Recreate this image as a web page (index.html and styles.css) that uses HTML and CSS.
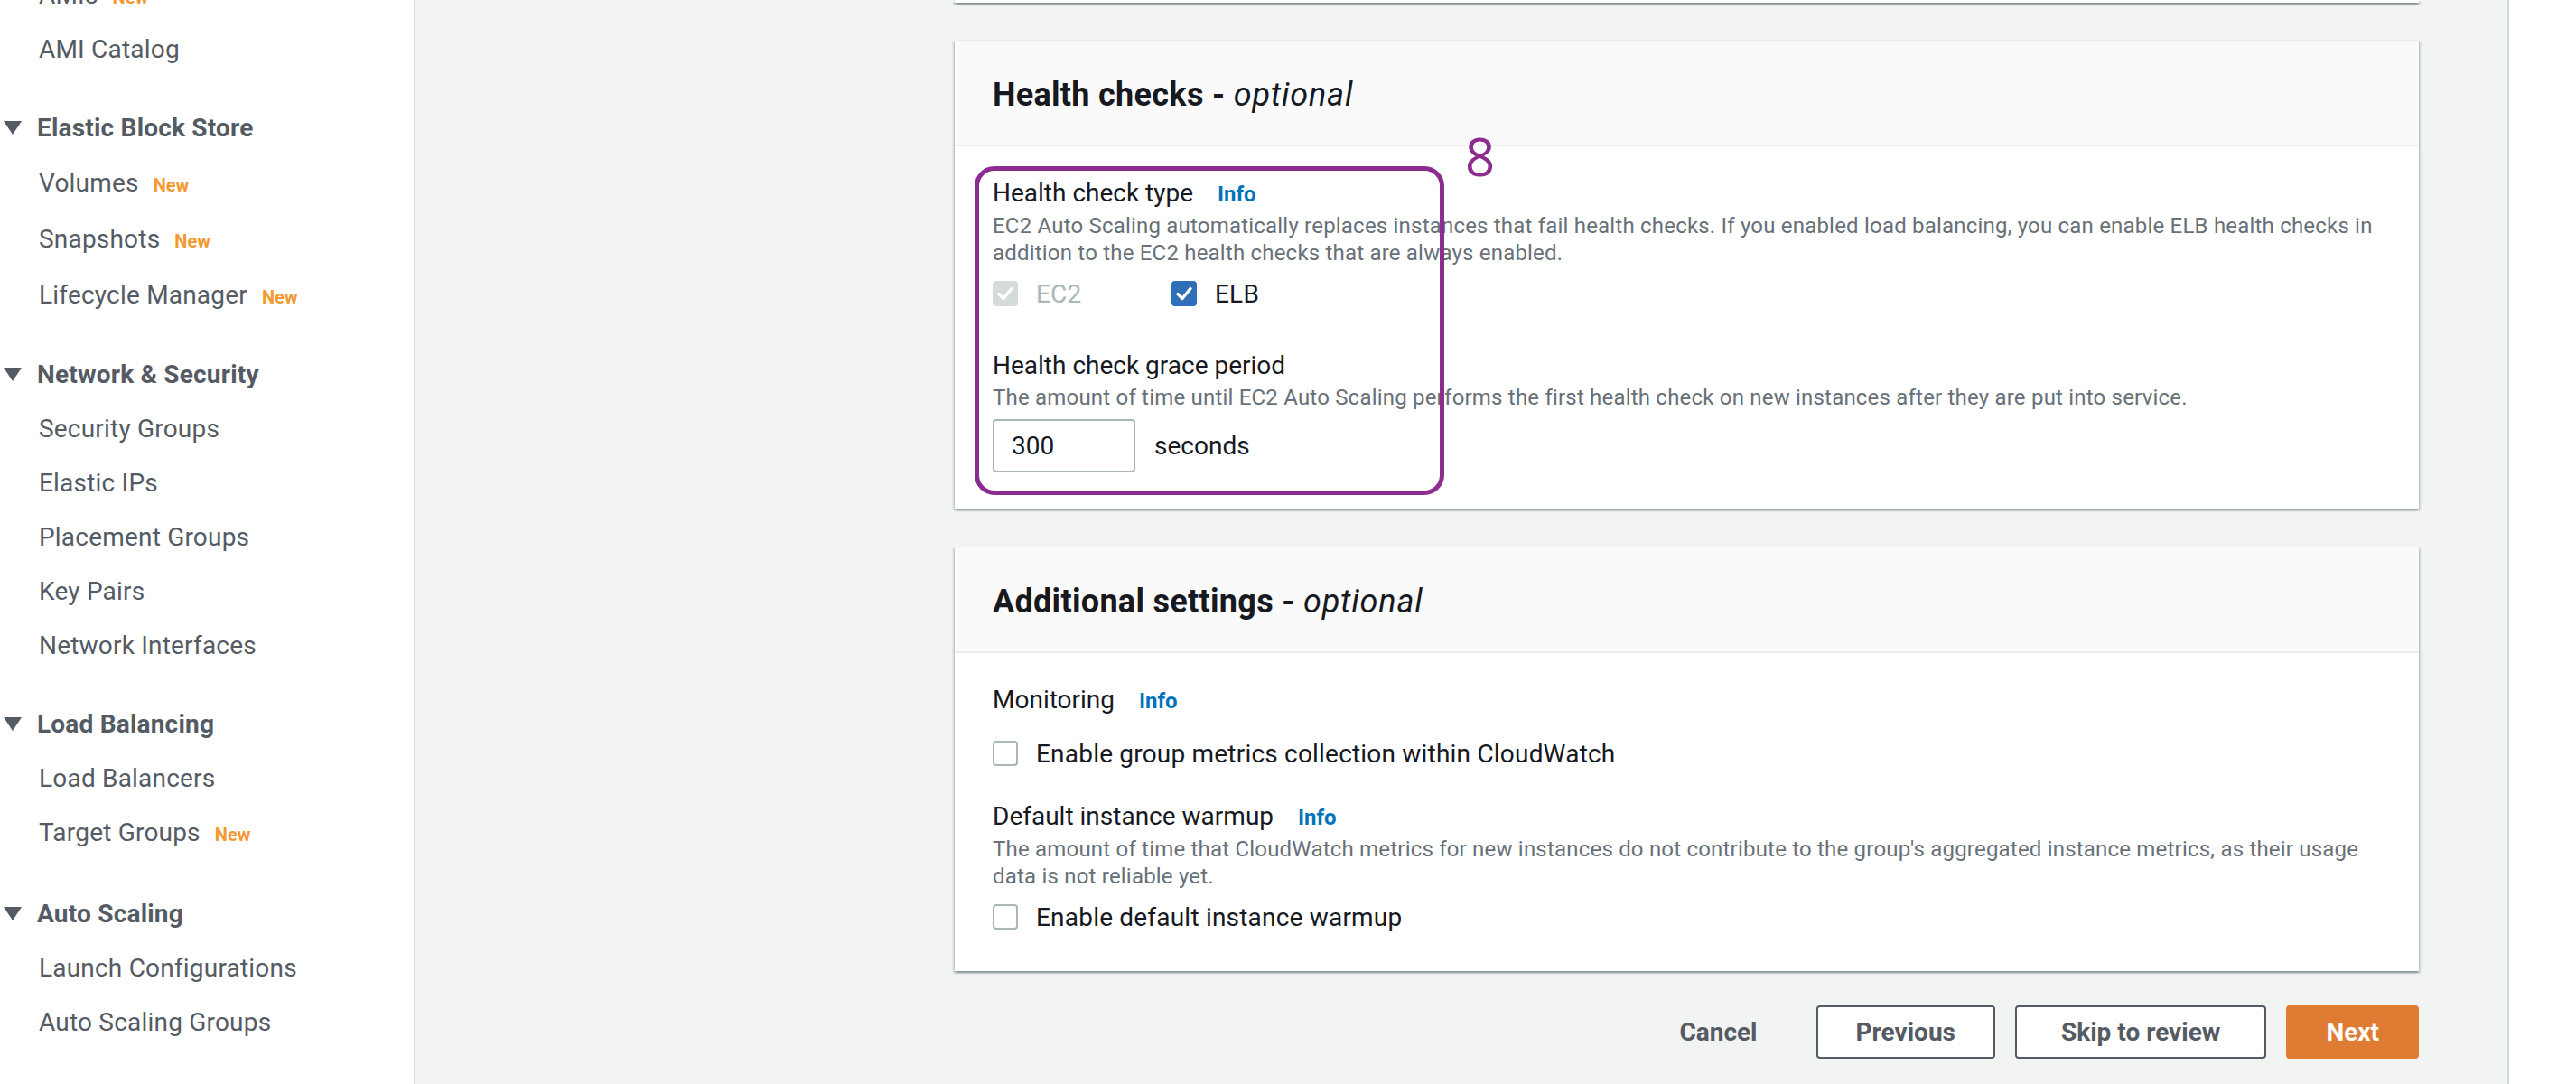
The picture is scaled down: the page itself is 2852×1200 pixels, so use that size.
FILE: index.html
```html
<!DOCTYPE html>
<html lang="en">
<head>
<meta charset="utf-8">
<title>Create Auto Scaling group - Health checks</title>
<link rel="stylesheet" href="styles.css">
</head>
<body>
<div class="app">
  <nav class="sidebar">
    <ul class="nav">
      <li class="nav-section">
        <div class="nav-header"><span class="caret"></span>Images</div>
        <ul class="nav-items">
          <li class="nav-item">AMIs<span class="badge-new">New</span></li>
          <li class="nav-item">AMI Catalog</li>
        </ul>
      </li>
      <li class="nav-section">
        <div class="nav-header"><span class="caret"></span>Elastic Block Store</div>
        <ul class="nav-items">
          <li class="nav-item nav-item-tall">Volumes<span class="badge-new">New</span></li>
          <li class="nav-item nav-item-tall">Snapshots<span class="badge-new">New</span></li>
          <li class="nav-item nav-item-tall">Lifecycle Manager<span class="badge-new">New</span></li>
        </ul>
      </li>
      <li class="nav-section">
        <div class="nav-header"><span class="caret"></span>Network &amp; Security</div>
        <ul class="nav-items">
          <li class="nav-item">Security Groups</li>
          <li class="nav-item">Elastic IPs</li>
          <li class="nav-item">Placement Groups</li>
          <li class="nav-item">Key Pairs</li>
          <li class="nav-item">Network Interfaces</li>
        </ul>
      </li>
      <li class="nav-section">
        <div class="nav-header"><span class="caret"></span>Load Balancing</div>
        <ul class="nav-items">
          <li class="nav-item">Load Balancers</li>
          <li class="nav-item">Target Groups<span class="badge-new">New</span></li>
        </ul>
      </li>
      <li class="nav-section nav-section-last">
        <div class="nav-header"><span class="caret"></span>Auto Scaling</div>
        <ul class="nav-items">
          <li class="nav-item">Launch Configurations</li>
          <li class="nav-item">Auto Scaling Groups</li>
        </ul>
      </li>
    </ul>
  </nav>

  <main class="main">
    <div class="wizard">
      <div class="card card-stub"></div>

      <section class="card card-health">
        <header class="card-header">
          <h2 class="card-title">Health checks - <i>optional</i></h2>
        </header>
        <div class="card-body">
          <div class="field-label">Health check type <a class="info">Info</a></div>
          <p class="field-desc">EC2 Auto Scaling automatically replaces instances that fail health checks. If you enabled load balancing, you can enable ELB health checks in addition to the EC2 health checks that are always enabled.</p>
          <div class="check-row check-row-tight">
            <label class="check check-wide check-disabled">
              <span class="box box-disabled">
                <svg viewBox="0 0 28 28" width="28" height="28"><polyline points="7,14.5 12,19.5 21,8.5" fill="none" stroke="#fff" stroke-width="3.4" stroke-linecap="round" stroke-linejoin="round"/></svg>
              </span>
              <span class="check-text">EC2</span>
            </label>
            <label class="check">
              <span class="box box-checked">
                <svg viewBox="0 0 28 28" width="28" height="28"><polyline points="7,14.5 12,19.5 21,8.5" fill="none" stroke="#fff" stroke-width="3.4" stroke-linecap="round" stroke-linejoin="round"/></svg>
              </span>
              <span class="check-text">ELB</span>
            </label>
          </div>
          <div class="field-label field-gap">Health check grace period</div>
          <p class="field-desc">The amount of time until EC2 Auto Scaling performs the first health check on new instances after they are put into service.</p>
          <div class="input-row">
            <span class="text-input">300</span>
            <span class="unit">seconds</span>
          </div>
        </div>
        <div class="annotation"></div>
        <span class="annotation-num">8</span>
      </section>

      <section class="card card-additional">
        <header class="card-header">
          <h2 class="card-title">Additional settings - <i>optional</i></h2>
        </header>
        <div class="card-body">
          <div class="field-label">Monitoring <a class="info">Info</a></div>
          <div class="check-row check-row-loose">
            <label class="check">
              <span class="box"></span>
              <span class="check-text">Enable group metrics collection within CloudWatch</span>
            </label>
          </div>
          <div class="field-label field-gap-sm">Default instance warmup <a class="info">Info</a></div>
          <p class="field-desc">The amount of time that CloudWatch metrics for new instances do not contribute to the group's aggregated instance metrics, as their usage data is not reliable yet.</p>
          <div class="check-row check-row-tight">
            <label class="check">
              <span class="box"></span>
              <span class="check-text">Enable default instance warmup</span>
            </label>
          </div>
        </div>
      </section>

      <div class="actions">
        <button class="btn btn-link">Cancel</button>
        <button class="btn">Previous</button>
        <button class="btn btn-wide">Skip to review</button>
        <button class="btn btn-primary">Next</button>
      </div>
    </div>
  </main>

  <aside class="help-rail"></aside>
</div>
</body>
</html>
```

FILE: styles.css
```css
* {
  box-sizing: border-box;
}

html,
body {
  margin: 0;
  padding: 0;
}

body {
  width: 2852px;
  height: 1200px;
  overflow: hidden;
  font-family: Roboto, "Liberation Sans", Arial, sans-serif;
  color: #16191f;
  background: #f2f3f3;
}

.app {
  display: grid;
  grid-template-columns: 460px 1fr 76px;
  height: 1200px;
}

/* ---------- Sidebar ---------- */
.sidebar {
  background: #ffffff;
  border-right: 2px solid #d5dbdb;
  overflow: hidden;
}

.nav {
  list-style: none;
  margin: -97px 0 0 0;
  padding: 0;
}

.nav-section + .nav-section {
  margin-top: 25px;
}

.nav-section.nav-section-last {
  margin-top: 28px;
}

.nav-header {
  display: flex;
  align-items: center;
  height: 62px;
  font-size: 28px;
  font-weight: 700;
  color: #545b64;
  letter-spacing: 0.2px;
}

.caret {
  width: 0;
  height: 0;
  margin-left: 4px;
  margin-right: 17px;
  border-left: 10px solid transparent;
  border-right: 10px solid transparent;
  border-top: 15px solid #545b64;
}

.nav-items {
  list-style: none;
  margin: 0;
  padding: 0;
}

.nav-item {
  height: 60px;
  line-height: 60px;
  padding-left: 43px;
  font-size: 28px;
  color: #545b64;
  white-space: nowrap;
  letter-spacing: 0.2px;
}

.nav-item-tall {
  height: 62px;
  line-height: 62px;
}

.badge-new {
  margin-left: 16px;
  font-size: 20px;
  font-weight: 700;
  color: #f39a33;
  letter-spacing: 0;
}

/* ---------- Main ---------- */
.main {
  background: #f2f3f3;
  padding: 0 98px 0 597px;
  overflow: hidden;
}

.help-rail {
  background: #ffffff;
  border-left: 2px solid #d5dbdb;
}

.wizard {
  display: flex;
  flex-direction: column;
}

.card {
  position: relative;
  background: #ffffff;
  border-top: 1px solid #eaeded;
  box-shadow: 0 2px 2px 0 rgba(0, 28, 36, 0.3),
              2px 2px 2px 0 rgba(0, 28, 36, 0.12),
              -2px 2px 2px 0 rgba(0, 28, 36, 0.12);
}

.card-stub {
  height: 3px;
  border-top: 0;
}

.card-health {
  margin-top: 41px;
}

.card-additional {
  margin-top: 42px;
}

.card-header {
  display: flex;
  align-items: center;
  height: 117px;
  padding: 4px 42px 0 42px;
  background: #fafafa;
  border-bottom: 2px solid #eaeded;
}

.card-title {
  margin: 0;
  font-size: 36px;
  line-height: 44px;
  font-weight: 700;
  color: #16191f;
  letter-spacing: 0.3px;
}

.card-title i {
  font-weight: 400;
  letter-spacing: 0.8px;
}

.card-body {
  padding: 32px 42px 40px 42px;
}

.field-label {
  font-size: 28px;
  line-height: 40px;
  color: #16191f;
}

.field-gap {
  margin-top: 40px;
}

.field-gap-sm {
  margin-top: 30px;
}

.info {
  margin-left: 20px;
  font-size: 24px;
  font-weight: 700;
  color: #0073bb;
  text-decoration: none;
}

.field-desc {
  margin: 0;
  font-size: 24px;
  line-height: 30px;
  color: #687078;
  letter-spacing: 0.2px;
}

.check-row {
  display: flex;
  align-items: center;
  height: 40px;
}

.check-row-tight {
  margin-top: 10px;
}

.check-row-loose {
  margin-top: 18px;
}

.check {
  display: flex;
  align-items: center;
  gap: 20px;
  font-size: 28px;
  color: #16191f;
}

.check-text {
  letter-spacing: 0.2px;
}

.check-wide {
  width: 198px;
}

.check-disabled .check-text {
  color: #aab7b8;
}

.box {
  display: block;
  width: 28px;
  height: 28px;
  border: 2px solid #aab7b8;
  border-radius: 4px;
  background: #ffffff;
  position: relative;
}

.box svg {
  position: absolute;
  left: -2px;
  top: -2px;
}

.box-checked {
  background: #2f6fb7;
  border-color: #2f6fb7;
}

.box-disabled {
  background: #d5dbdb;
  border-color: #d5dbdb;
}

.input-row {
  display: flex;
  align-items: center;
  gap: 21px;
  margin-top: 9px;
}

.text-input {
  display: flex;
  align-items: center;
  width: 158px;
  height: 59px;
  padding-left: 19px;
  border: 2px solid #aab7b8;
  border-radius: 4px;
  background: #ffffff;
  font-size: 28px;
  color: #16191f;
}

.unit {
  font-size: 28px;
  color: #16191f;
}

/* Annotation overlay */
.annotation {
  position: absolute;
  left: 22px;
  top: 139px;
  width: 520px;
  height: 364px;
  border: 5px solid #8b2c8e;
  border-radius: 22px;
}

.annotation-num {
  position: absolute;
  left: 565px;
  top: 99px;
  font-family: "Open Sans", "DejaVu Sans", sans-serif;
  font-size: 58px;
  font-weight: 400;
  line-height: 1;
  color: #8b2c8e;
}

/* Actions */
.actions {
  display: flex;
  justify-content: flex-end;
  gap: 22px;
  margin-top: 38px;
}

.btn {
  height: 59px;
  padding: 0 42px;
  border: 2px solid #545b64;
  border-radius: 4px;
  background: #ffffff;
  font-family: Roboto, "Liberation Sans", Arial, sans-serif;
  font-size: 28px;
  font-weight: 700;
  color: #545b64;
}

.btn-wide {
  padding: 0 49px;
}

.btn-link {
  border-color: transparent;
  background: transparent;
  padding: 0 41px 0 40px;
}

.btn-primary {
  padding: 0 42px;
  background: #df7b33;
  border-color: #df7b33;
  color: #ffffff;
}
```
